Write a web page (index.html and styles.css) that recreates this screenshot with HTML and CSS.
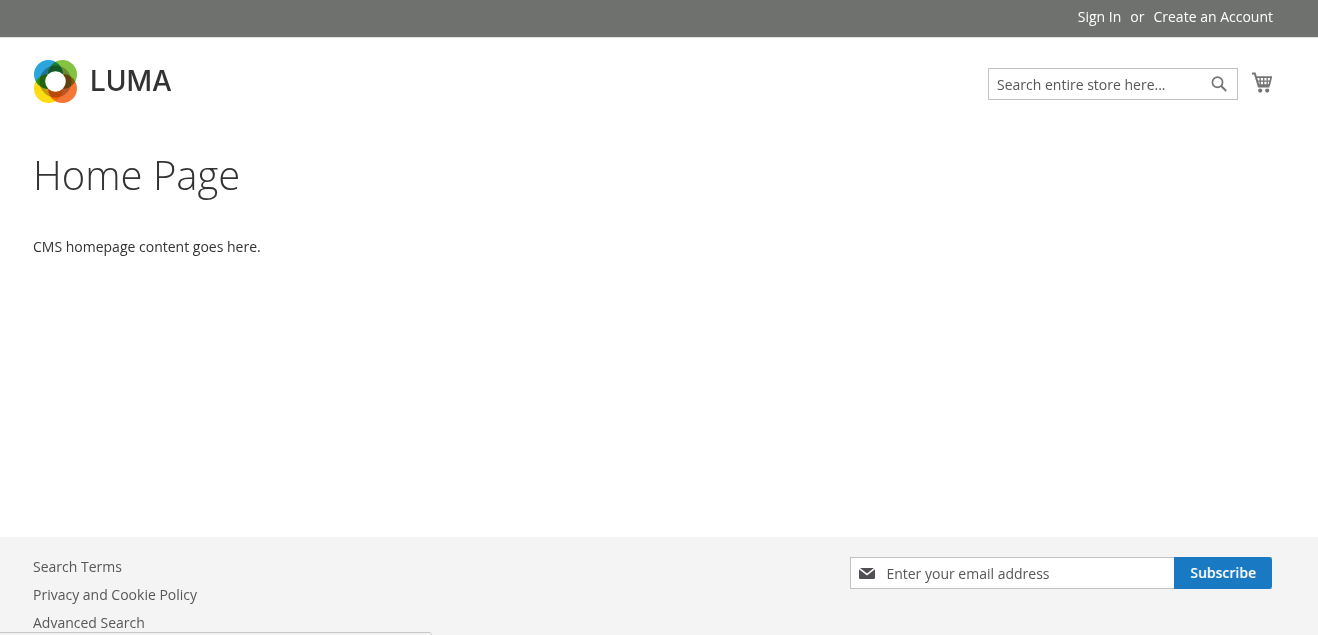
FILE: index.html
```html
<!DOCTYPE html>
<html lang="en">
<head>
<meta charset="utf-8">
<title>Home Page</title>
<link rel="stylesheet" href="styles.css">
</head>
<body>
<header>
  <nav class="panel wrap" aria-label="Account">
    <a href="#">Sign In</a>
    <span>or</span>
    <a href="#">Create an Account</a>
  </nav>
  <div class="masthead wrap">
    <a class="logo" href="#" aria-label="Luma">
      <svg width="45" height="46" viewBox="0 0 45 46" aria-hidden="true">
        <g class="logo-rings">
          <circle cx="15.5" cy="16.5" r="14.5" fill="#2ba5dc"/>
          <circle cx="29.5" cy="16.5" r="14.5" fill="#84c341"/>
          <circle cx="15.5" cy="30.5" r="14.5" fill="#ffdc12"/>
          <circle cx="29.5" cy="30.5" r="14.5" fill="#f47738"/>
          <circle cx="22.5" cy="23.5" r="16" fill="#c4b4ac"/>
        </g>
        <circle cx="22.5" cy="23.5" r="10.3" fill="#fff"/>
      </svg>
      <span class="wordmark">LUMA</span>
    </a>
    <form class="search" role="search">
      <input type="text" aria-label="Search" placeholder="Search entire store here...">
      <button type="button" aria-label="Search">
        <svg width="16" height="16" viewBox="0 0 16 16" fill="none" stroke="#757575" stroke-width="2" aria-hidden="true">
          <circle cx="6.5" cy="6.3" r="5.1" stroke-width="1.7"/>
          <path d="M10.2 10l5 5"/>
        </svg>
      </button>
    </form>
    <a class="cart" href="#" aria-label="My Cart">
      <svg width="20" height="21" viewBox="0 0 20 21" fill="none" stroke="#757575" aria-hidden="true">
        <path d="M0 1.4h2.8l4 13h10.6" stroke-width="2"/>
        <path d="M4 5.2h15.2l-2 8H6.2" stroke-width="1.7"/>
        <path d="M5 9.2h13.4M8.2 5v8M11.7 5v8M15.2 5v8" stroke-width="1.3"/>
        <circle cx="8.2" cy="18.6" r="2.1" fill="#757575" stroke="none"/>
        <circle cx="15.2" cy="18.6" r="2.1" fill="#757575" stroke="none"/>
      </svg>
    </a>
  </div>
</header>
<main class="wrap">
  <h1>Home Page</h1>
  <p>CMS homepage content goes here.</p>
</main>
<footer>
  <div class="footer-content wrap">
    <ul>
      <li><a href="#">Search Terms</a></li>
      <li><a href="#">Privacy and Cookie Policy</a></li>
      <li><a href="#">Advanced Search</a></li>
    </ul>
    <form class="newsletter">
      <svg width="16" height="11" viewBox="0 0 16 11" fill="#514f53" aria-hidden="true">
        <path d="M1 0h14L8 5.6z"/>
        <path d="M0 1.2l8 6.2 8-6.2V10a1 1 0 0 1-1 1H1a1 1 0 0 1-1-1z"/>
      </svg>
      <input type="email" aria-label="Email address" placeholder="Enter your email address">
      <button type="button">Subscribe</button>
    </form>
  </div>
</footer>
<div class="status-bar"></div>
</body>
</html>
```
FILE: styles.css
```css
* { box-sizing: border-box; }
body {
  display: flex;
  flex-direction: column;
  min-height: 100vh;
  margin: 0;
  background: #fff;
  color: #333;
  font: 14px/20px "Open Sans", sans-serif;
}
a { color: inherit; text-decoration: none; }
input, button { font: inherit; margin: 0; }
input::placeholder { color: #575757; opacity: 1; }
.wrap { width: 100%; padding-left: 33px; padding-right: 45px; }
.panel {
  display: flex;
  justify-content: flex-end;
  gap: 9px;
  padding-top: 7px;
  padding-bottom: 10px;
  background: #6e716e;
  border-bottom: 1px solid #e0e0e0;
  color: #fff;
  font-weight: 500;
}
.masthead { display: flex; align-items: flex-start; padding-top: 20px; }
.logo { display: flex; align-items: center; gap: 12px; margin-right: auto; }
.logo svg { display: block; }
.logo-rings { isolation: isolate; }
.logo-rings circle { mix-blend-mode: multiply; }
.wordmark { font: 500 28px/46px Inter, sans-serif; }
.search { display: flex; width: 250px; margin-top: 10px; border: 1px solid #c2c2c2; background: #fff; }
.search input { flex: 1; min-width: 0; height: 30px; padding: 1px 8px 0; border: 0; background: none; }
.search button { display: flex; align-items: center; padding: 0 10px; border: 0; background: none; }
.cart { margin: 14px 1px 0 14px; }
.cart svg { display: block; }
main { flex: 1; padding-top: 49px; }
h1 { margin: 0; font-size: 40px; line-height: 44px; font-weight: 300; }
p { margin: 40px 0 0; }
footer { background: #f4f4f4; }
.footer-content { display: flex; justify-content: space-between; align-items: flex-start; padding-top: 20px; padding-bottom: 2px; }
ul { display: grid; gap: 8px; margin: 0; padding: 0; list-style: none; color: #575757; }
.newsletter { display: flex; align-items: center; width: 34%; min-width: 320px; height: 32px; margin-right: 1px; padding-left: 8px; border: 1px solid #c2c2c2; border-right: 0; background: #fff; }
.newsletter input { flex: 1; min-width: 0; height: 30px; padding: 1px 11px 0; border: 0; background: none; }
.newsletter button { height: 32px; padding: 0 16px; border: 0; border-radius: 0 3px 3px 0; background: #1979c3; color: #fff; font-weight: 600; }
.status-bar { position: fixed; left: 0; bottom: 0; width: 432px; height: 3px; border-top: 1px solid #c8c8c8; border-right: 1px solid #d8d8d8; border-top-right-radius: 3px; background: #f2f2f2; }
```
